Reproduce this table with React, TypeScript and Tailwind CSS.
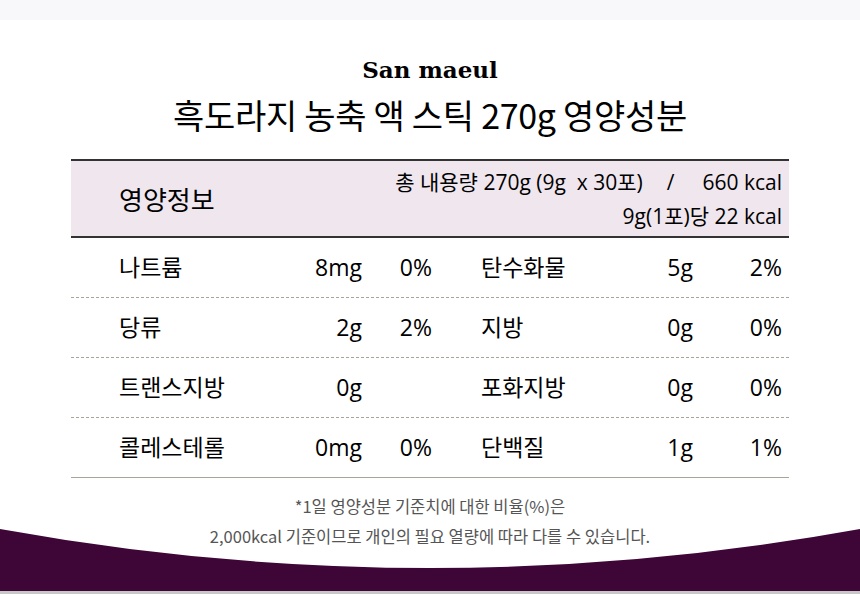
import React from 'react';

type Cell = { name: string; amount: string; pct: string };

const rows: [Cell, Cell][] = [
  [
    { name: '나트륨', amount: '8mg', pct: '0%' },
    { name: '탄수화물', amount: '5g', pct: '2%' },
  ],
  [
    { name: '당류', amount: '2g', pct: '2%' },
    { name: '지방', amount: '0g', pct: '0%' },
  ],
  [
    { name: '트랜스지방', amount: '0g', pct: '' },
    { name: '포화지방', amount: '0g', pct: '0%' },
  ],
  [
    { name: '콜레스테롤', amount: '0mg', pct: '0%' },
    { name: '단백질', amount: '1g', pct: '1%' },
  ],
];

const kr = { fontFamily: '"Noto Sans CJK KR", "Noto Sans", sans-serif' };
const tbl = { fontFamily: '"Open Sans", "Noto Sans CJK KR", sans-serif' };

const App: React.FC = () => {
  return (
    <div className="w-[860px] h-[594px] bg-white overflow-hidden flex flex-col" style={kr}>
      <div className="h-[20px] shrink-0 bg-[#f8f7f9]"></div>

      {/* Heading */}
      <div className="flex flex-col items-center pt-[35px] shrink-0">
        <h2
          className="text-[23px] leading-[30px] font-bold text-black"
          style={{ fontFamily: '"DejaVu Serif", "Liberation Serif", serif' }}
        >
          San maeul
        </h2>
        <h1 className="mt-[8px] h-[44px] text-[34px] leading-[44px] text-black tracking-[-0.3px]">
          흑도라지 농축 액 스틱 270g 영양성분
        </h1>
      </div>

      {/* Table */}
      <div className="mx-[71px] mt-[22px] border-t-2 border-[#333] shrink-0 text-black" style={tbl}>
        <div className="h-[77px] bg-[#efe6ee] flex items-center justify-between pl-[48px] pr-[7px] border-b-2 border-[#333]">
          <span className="text-[26px]" style={kr}>영양정보</span>
          <div className="flex flex-col items-end text-[21px] leading-[34px]">
            <div className="flex items-center">
              <span className="whitespace-pre">총 내용량 270g (9g  x 30포)</span>
              <span className="ml-[24px] mr-[28px]">/</span>
              <span>660 kcal</span>
            </div>
            <span>9g(1포)당 22 kcal</span>
          </div>
        </div>
        {rows.map((r, i) => (
          <div
            key={i}
            className={
              'h-[60px] flex items-center text-[23px] ' +
              (i < rows.length - 1 ? 'border-b border-dashed border-[#a9a39a]' : 'border-b border-[#a9a39a]')
            }
          >
            <div className="w-[291px] flex items-center pl-[48px]">
              <span className="flex-1">{r[0].name}</span>
              <span className="w-[80px] text-right">{r[0].amount}</span>
            </div>
            <span className="w-[70px] text-right">{r[0].pct}</span>
            <div className="w-[261px] flex items-center pl-[49px]">
              <span className="flex-1">{r[1].name}</span>
              <span className="w-[80px] text-right">{r[1].amount}</span>
            </div>
            <span className="w-[89px] text-right">{r[1].pct}</span>
          </div>
        ))}
      </div>

      {/* Footnote + wave */}
      <div className="relative h-[116px] shrink-0">
        <svg className="absolute inset-0" width="860" height="116" viewBox="0 0 860 116" preserveAspectRatio="none">
          <path d="M0 51 Q430 129 860 51 L860 113 L0 113 Z" fill="#3e0637" />
          <rect x="0" y="113" width="860" height="3" fill="#c8c8c8" />
        </svg>
        <div className="relative flex flex-col items-center pt-[13px] text-[16.5px] leading-[30px] text-[#555]">
          <p>*1일 영양성분 기준치에 대한 비율(%)은</p>
          <p>2,000kcal 기준이므로 개인의 필요 열량에 따라 다를 수 있습니다.</p>
        </div>
      </div>
    </div>
  );
};

export default App;
